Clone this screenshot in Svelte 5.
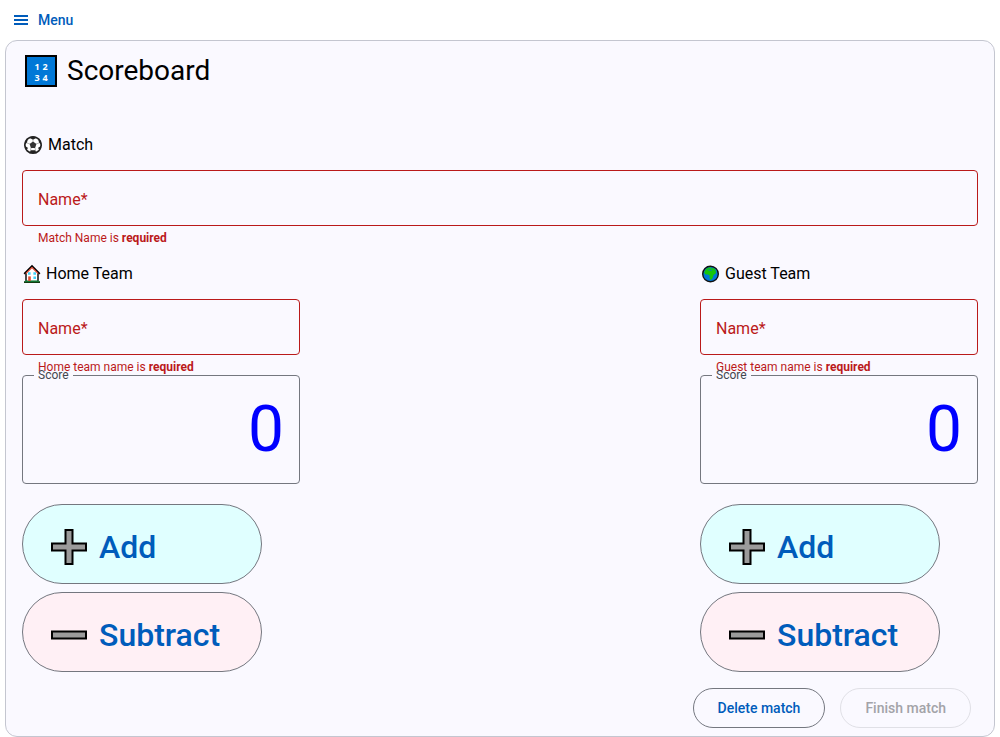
<script>
  let matchName = $state('');
  let teams = $state([
    { id: 'home', title: 'Home Team', error: 'Home team name is', name: '', score: 0 },
    { id: 'guest', title: 'Guest Team', error: 'Guest team name is', name: '', score: 0 }
  ]);
  let complete = $derived(matchName !== '' && teams.every((team) => team.name !== ''));

  function reset() {
    matchName = '';
    for (const team of teams) {
      team.name = '';
      team.score = 0;
    }
  }
</script>

{#snippet nameField(id, prefix, get, set)}
  <div class="field" class:filled={get() !== ''}>
    <input {id} type="text" value={get()} oninput={(e) => set(e.currentTarget.value)} required />
    <label for={id}>Name*</label>
  </div>
  <p class="hint">{#if get() === ''}{prefix} <strong>required</strong>{/if}</p>
{/snippet}

<header>
  <button class="menu" type="button">
    <svg width="18" height="18" viewBox="0 0 18 18" aria-hidden="true">
      <path d="M2 4h14v2H2zM2 8h14v2H2zM2 12h14v2H2z" fill="currentColor" />
    </svg>
    Menu
  </button>
</header>

<main>
  <h1>
    <svg width="32" height="32" viewBox="0 0 32 32" aria-hidden="true">
      <path d="M0 0h32v32H0z" fill="#000" />
      <path d="M2 2h28v28H2z" fill="#0078d7" />
      <g class="digits">
        <text x="12" y="15">1</text>
        <text x="20" y="15">2</text>
        <text x="12" y="26">3</text>
        <text x="20" y="26">4</text>
      </g>
    </svg>
    Scoreboard
  </h1>

  <h2>
    <svg width="20" height="20" viewBox="0 0 20 20" aria-hidden="true">
      <circle cx="10" cy="10" r="8.2" fill="#fff" stroke="#222" stroke-width="1.7" />
      <path d="M10 6.6l3.4 2.5-1.3 4H7.9l-1.3-4z" fill="#333" />
      <path d="M6 2.4L10 4.8l4-2.4-2-1H8zM1.3 9l2.6-1 .9-4.2L2.3 6zM18.7 9l-2.6-1-.9-4.2L17.7 6zM2.8 15.2l2.3-2.2-3-2zM17.2 15.2L14.9 13l3-2zM6.6 18.2l1-2.9h4.8l1 2.9z" fill="#222" />
      <path d="M10 4v3M3.5 7.8L7 9M16.5 7.8L13 9M8 13l-.6 2.6M12 13l.6 2.6" fill="none" stroke="#999" stroke-width=".7" />
    </svg>
    Match
  </h2>
  {@render nameField('match-name', 'Match Name is', () => matchName, (v) => (matchName = v))}

  <div class="teams">
    {#each teams as team (team.id)}
      <section>
        <h2>
          {#if team.id === 'home'}
            <svg width="18" height="20" viewBox="0 0 18 20" aria-hidden="true">
              <path d="M3 8.5l6-6 6 6V17H3z" fill="#fff" />
              <path d="M3 9v8.5h12V9" fill="none" stroke="#000" stroke-width="1.4" />
              <path d="M1 17.2h16v1.8H1z" fill="#123b12" />
              <path d="M2 16.6h14v1H2z" fill="#16a34a" />
              <path d="M1.2 9.9L9 2.1l7.8 7.8" fill="none" stroke="#000" stroke-width="1.8" />
              <path d="M2.8 9.6L9 3.6l6.2 6" fill="none" stroke="#e8503a" stroke-width="1.2" />
              <path d="M5 8.3h2.6v2.4H5zM10.4 8.3H13v2.4h-2.6zM10.4 12.5H13V15h-2.6z" fill="#3fd0f7" />
              <path d="M5.2 12.4h2.6v4.6H5.2z" fill="#e34b32" />
            </svg>
          {:else}
            <svg width="19" height="20" viewBox="0 0 19 20" aria-hidden="true">
              <circle cx="9.5" cy="10" r="7.8" fill="#0078d7" stroke="#111" stroke-width="1.4" />
              <path d="M4 6.5C5.5 4 8.500 3 10.100 3.200l-.8 1.600 2-.8c2 0 3.400 1.500 4.200 3l-1 2.700-2 1.200-.8 3-2 2.300-1.200-2.200.2-2.600-1.800-1-2.300.2-1.400-1.800z" fill="#16c60c" />
              <path d="M7 5.800l2.400.6 1.700-.5M14.600 5.300l.9 3" stroke="#0078d7" stroke-width=".8" fill="none" />
            </svg>
          {/if}
          {team.title}
        </h2>
        {@render nameField(`${team.id}-name`, team.error, () => team.name, (v) => (team.name = v))}

        <fieldset>
          <legend><label for="{team.id}-score">Score</label></legend>
          <input id="{team.id}-score" type="text" inputmode="numeric" bind:value={team.score} />
        </fieldset>

        <div class="controls">
          <button class="step add" type="button" onclick={() => team.score++}>
            <svg width="36" height="36" viewBox="0 0 36 36" aria-hidden="true">
              <path d="M14.500 1h7v13.500H35v7H21.500V35h-7V21.500H1v-7h13.500z" fill="#9b9b9b" stroke="#000" stroke-width="2" />
            </svg>
            Add
          </button>
          <button class="step subtract" type="button" onclick={() => team.score--}>
            <svg width="36" height="36" viewBox="0 0 36 36" aria-hidden="true">
              <path d="M1 14.500h34v7H1z" fill="#9b9b9b" stroke="#000" stroke-width="2" />
            </svg>
            Subtract
          </button>
        </div>
      </section>
    {/each}
  </div>

  <div class="actions">
    <button type="button" onclick={reset}>Delete match</button>
    <button type="button" disabled={!complete}>Finish match</button>
  </div>
</main>

<style>
  :global(body) {
    margin: 0;
    background: #fff;
    color: #000;
    font-family: Roboto, "Liberation Sans", sans-serif;
  }

  :global(*) {
    box-sizing: border-box;
  }

  svg {
    flex: none;
  }

  button,
  input {
    font-family: inherit;
  }

  button {
    color: #005cbb;
    font-weight: 500;
    cursor: pointer;
  }

  .menu {
    display: flex;
    align-items: center;
    gap: 8px;
    height: 40px;
    padding: 0 12px;
    border: 0;
    background: none;
    font-size: 14px;
  }

  main {
    margin: 0 5px;
    padding: 14px 16px 8px;
    border: 1px solid #c4c6d0;
    border-radius: 12px;
    background: #faf9ff;
  }

  h1 {
    display: flex;
    align-items: center;
    gap: 10px;
    margin: 0 0 43px;
    padding-left: 3px;
    font-size: 28px;
    font-weight: 400;
    line-height: 32px;
  }

  .digits {
    fill: #fff;
    font-family: "Open Sans", sans-serif;
    font-size: 9px;
    font-weight: 700;
    text-anchor: middle;
  }

  h2 {
    display: flex;
    align-items: center;
    gap: 5px;
    margin: 0;
    padding: 3px 0 13px 1px;
    font-size: 16px;
    font-weight: 400;
    line-height: 24px;
  }

  .field {
    position: relative;
  }

  .field input {
    display: block;
    width: 100%;
    height: 56px;
    padding: 16px 15px;
    border: 1px solid #ba1a1a;
    border-radius: 4px;
    background: none;
    font-size: 16px;
  }

  .field label {
    position: absolute;
    top: 18px;
    left: 16px;
    color: #ba1a1a;
    font-size: 16px;
    line-height: 24px;
    pointer-events: none;
  }

  .field.filled input {
    border-color: #74777f;
  }

  .field.filled label {
    display: none;
  }

  .hint {
    height: 20px;
    margin: 0;
    padding: 4px 16px 0;
    color: #ba1a1a;
    font-size: 12px;
    line-height: 16px;
  }

  .teams {
    display: flex;
    justify-content: space-between;
    gap: 16px;
    padding-top: 13px;
  }

  section {
    flex: 0 1 278px;
    min-width: 0;
  }

  fieldset {
    min-width: 0;
    margin: 0;
    padding: 16px 15px;
    border: 1px solid #74777f;
    border-radius: 4px;
  }

  legend {
    margin-left: -4px;
    padding: 0 4px;
    color: #44474e;
    font-size: 12px;
    line-height: 1px;
  }

  fieldset input {
    display: block;
    width: 100%;
    height: 75px;
    padding: 0;
    border: 0;
    background: none;
    color: #00f;
    font-size: 64px;
    text-align: right;
  }

  .controls {
    display: flex;
    flex-direction: column;
    align-items: flex-start;
    gap: 8px;
    padding-top: 20px;
  }

  .step {
    display: flex;
    align-items: center;
    gap: 12px;
    width: 240px;
    height: 80px;
    padding: 6px 28px 0;
    border: 1px solid #74777f;
    border-radius: 40px;
    font-size: 32px;
  }

  .add {
    background: #e0ffff;
  }

  .subtract {
    background: #fff0f5;
  }

  .actions {
    display: flex;
    justify-content: flex-end;
    gap: 15px;
    padding: 16px 7px 0 0;
  }

  .actions button {
    height: 40px;
    padding: 0 24px;
    border: 1px solid #74777f;
    border-radius: 20px;
    background: none;
    font-size: 14px;
  }

  .actions button:disabled {
    border-color: #e0e0e6;
    color: #a3a3a8;
    cursor: default;
  }
</style>
